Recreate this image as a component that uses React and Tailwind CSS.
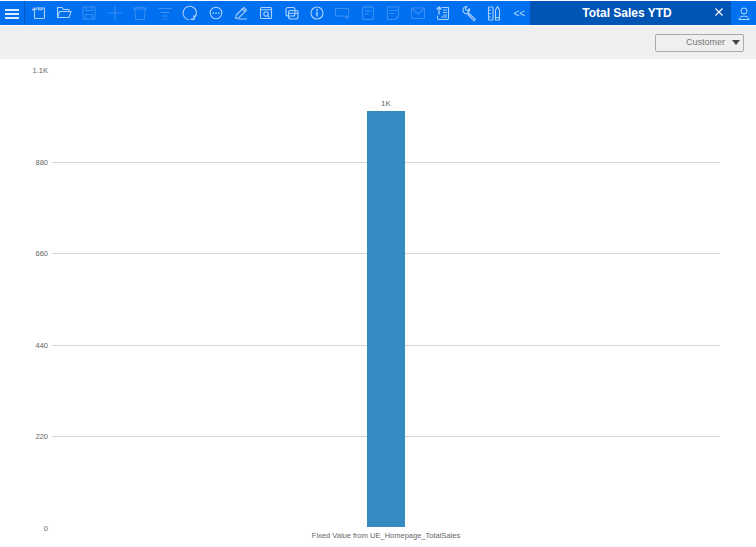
const on = 'text-[#a9d0fb]';
const off = 'text-[#3a8ef3]';

function Ico({ className, children }) {
  return (
    <span className={`flex w-[25.3px] shrink-0 justify-center ${className}`}>
      <svg width="18" height="18" viewBox="0 0 18 18" fill="none" stroke="currentColor" strokeWidth="1.100" strokeLinecap="round" strokeLinejoin="round">
        {children}
      </svg>
    </span>
  );
}

const icons = [
  [on, <><path d="M6 4h8.500v9.500a1 1 0 0 1-1 1h-8a1 1 0 0 1-1-1V8" /><path d="M2.500 5.500h3.500M4.300 3.800v3.400" strokeWidth="1.300" /><path d="M8.500 4v1.800h3.500V4" /></>],
  [on, <><path d="M2.500 13.500V3.500h4.500l1.500 2h5.500v2" /><path d="M2.500 13.500l2-6h11.500l-2 6z" /></>],
  [off, <><rect x="3" y="3" width="12" height="12" rx="1" /><path d="M6 3v3.500h6V3M5.500 15v-4.500h7V15" /></>],
  [off, <path d="M9 2.500v13M2.500 9h13" />],
  [off, <><path d="M3.500 5h11l-1.300 10.500H4.800z" /><path d="M3 5l2.500-1.800h7L15 5" /></>],
  [off, <path d="M2.500 4.500h13M4.800 8.500h8.400M6.500 12h5M8 15h2" />],
  [on, <><path d="M14 13.200A6.700 6.700 0 1 0 8 15.700" /><path d="M13 11.800v3.500h-2.800" strokeWidth="1.500" /></>],
  [on, <><circle cx="9" cy="9" r="5.800" /><path d="M6.300 9h.1M9 9h.1M11.700 9h.1" strokeWidth="1.700" /></>],
  [on, <><path d="M3.500 14.500l.8-3.500L11.800 3.500l2.700 2.700L7 13.700z" /><path d="M10.300 5l2.700 2.700M6.500 15h8" /></>],
  [on, <><rect x="3.500" y="3.500" width="11" height="11" rx="1" /><path d="M3.500 5.800h11" /><circle cx="9" cy="10" r="2.200" /><path d="M10.700 11.700l1.300 1.300" /></>],
  [on, <><rect x="3" y="3.500" width="9" height="8.500" rx="2" /><rect x="5.500" y="6.500" width="9.500" height="8.500" rx="2" /><path d="M5.500 9.200h9.500" /></>],
  [on, <><circle cx="9" cy="9" r="6" /><path d="M9 8.300v3.700" strokeWidth="1.500" /><path d="M9 5.600v.3" strokeWidth="1.700" /></>],
  [off, <><path d="M15.500 10V4.500h-13v7.500h9" /><path d="M14 11v4M12 13h4" strokeWidth="1.300" /></>],
  [off, <><rect x="3.500" y="3" width="11" height="12.500" rx="2" /><path d="M6.500 2v2M11.500 2v2M6.500 7h5M6.500 10h3" /></>],
  [off, <><path d="M3.500 3h11v9l-3.500 3.500H3.500z" /><path d="M6 6.500h6M6 9.500h3.500" /></>],
  [off, <><rect x="2.500" y="4" width="13" height="10.500" rx="1" /><path d="M3 4.500L9 10l6-5.500" /></>],
  [on, <><path d="M8 3.500h6.500v10.500a1.500 1.500 0 0 1-1.500 1.500H5a1.500 1.500 0 0 1-1.500-1.500V12" /><path d="M5 10V3M3 5l2-2 2 2" strokeWidth="1.300" /><path d="M9.500 6h3M9.500 8.500h3M9.500 11h3M7.500 13h5" /></>],
  [on, <><path d="M3 5.500a3.500 3.500 0 0 1 4-3L5.300 4.600l.8 1.700 1.800.3 1.500-2A3.500 3.500 0 0 1 8 8.500l7 6.500a1 1 0 0 1-1.500 1.300L7 9.500a3.500 3.500 0 0 1-4-4z" /></>],
  [on, <><rect x="3.500" y="3" width="4.500" height="13" rx=".5" /><path d="M10.500 16V6l2-3.500 2 3.500v10z" /><path d="M3.500 6h2M3.500 9.500h2M3.500 13h2M10.500 13.500h4" /></>],
];

const grid = [
  [162, '880'],
  [253, '660'],
  [345, '440'],
  [436, '220'],
];

function Chart() {
  return (
    <svg width="756" height="488" viewBox="0 59 756 488" className="block" style={{ fontFamily: 'Arial, "Liberation Sans", sans-serif' }}>
      {grid.map(([y]) => (
        <line key={y} x1="52" x2="720" y1={y + 0.5} y2={y + 0.5} stroke="#d4d4d4" />
      ))}
      {grid.map(([y, t]) => (
        <text key={t} x="48" y={y + 3} textAnchor="end" fontSize="7.500" fill="#666">{t}</text>
      ))}
      <text x="48" y="73" textAnchor="end" fontSize="7.500" fill="#666">1.1K</text>
      <text x="48" y="531" textAnchor="end" fontSize="7.500" fill="#666">0</text>
      <rect x="367" y="111" width="38" height="416" fill="#388bc2" />
      <text x="386" y="106" textAnchor="middle" fontSize="8" fill="#666">1K</text>
      <text x="386" y="538" textAnchor="middle" fontSize="7.500" fill="#666">Fixed Value from UE_Homepage_TotalSales</text>
    </svg>
  );
}

export default function App() {
  return (
    <div className="w-[756px] h-[547px] overflow-hidden bg-white font-['Liberation_Sans',Arial,sans-serif]">
      <div className="h-px bg-white" />
      <div className="flex h-6 items-stretch bg-[#0070f0]">
        <div className="flex w-[25px] shrink-0 items-center justify-center border-r border-[#0058c0]">
          <div className="flex w-[14px] flex-col gap-[2px] pt-px">
            <span className="h-[2px] bg-[#dcecff]" />
            <span className="h-[2px] bg-[#dcecff]" />
            <span className="h-[2px] bg-[#dcecff]" />
          </div>
        </div>
        <div className="flex items-center pl-[1px]">
          {icons.map(([c, d], i) => (
            <Ico key={i} className={c}>{d}</Ico>
          ))}
        </div>
        <div className="flex flex-1 items-center justify-center pl-[2px] text-[10px] text-[#b9d8fb]">&lt;&lt;</div>
        <div className="flex w-[201px] shrink-0 items-center bg-[#0054b4] pr-[8px] text-white">
          <span className="flex-1 pl-[9px] text-center text-[12px] font-bold">Total Sales YTD</span>
          <svg className="-mt-[2px]" width="8" height="8" viewBox="0 0 8 8" stroke="currentColor" strokeWidth="1.100"><path d="M.5.5l7 7M7.500.5l-7 7" /></svg>
        </div>
        <div className="flex w-[25px] shrink-0 items-center justify-center text-[#b9d8fb]">
          <svg width="12" height="13" viewBox="0 0 12 13" fill="none" stroke="currentColor"><circle cx="6" cy="4" r="3" /><path d="M1 12.500c0-4.500 10-4.500 10 0z" /></svg>
        </div>
      </div>
      <div className="mt-px flex h-[33px] items-center justify-end bg-[#efefef] pr-[12px]">
        <div className="flex h-[18px] w-[89px] items-center justify-end rounded-[2px] border border-[#aaa] pr-[3px] text-[9px] text-[#777]">
          <span>Customer</span>
          <span className="ml-[7px] h-0 w-0 border-x-[4px] border-t-[5px] border-x-transparent border-t-[#444]" />
        </div>
      </div>
      <Chart />
    </div>
  );
}
